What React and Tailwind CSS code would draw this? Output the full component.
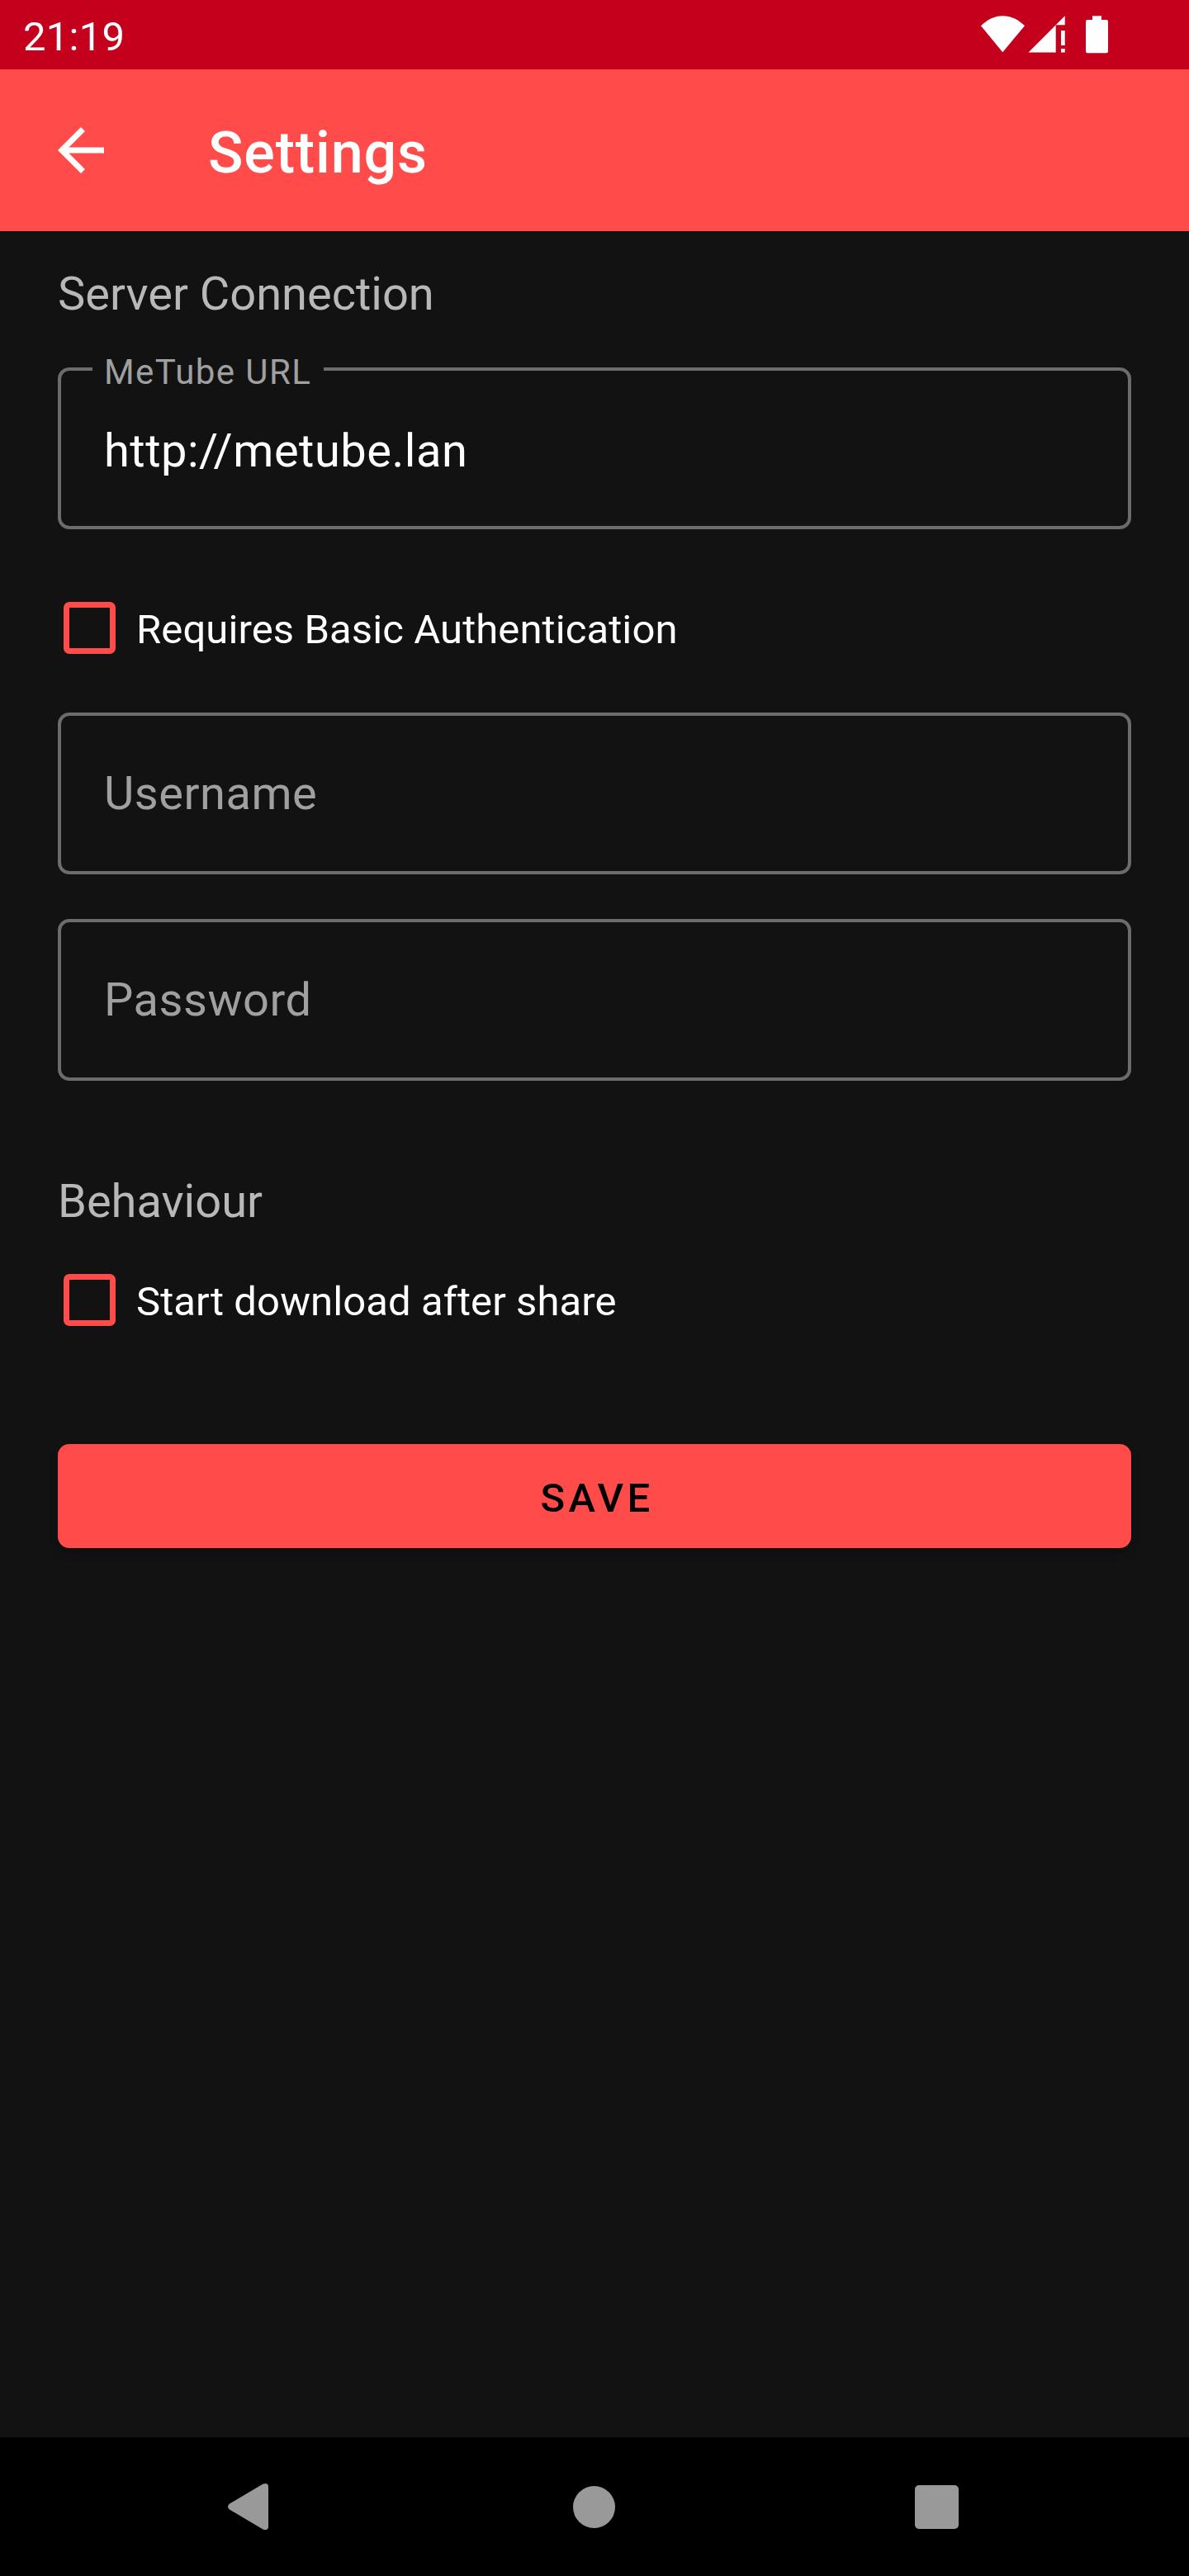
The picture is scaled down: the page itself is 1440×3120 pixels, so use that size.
const body = "text-[56px] leading-[64px]";

function WifiIcon() {
  return (
    <svg className="block h-[84px] w-[56px]" viewBox="1186 0 56 84" fill="#fff" aria-hidden="true">
      <path d="M1214.3 63.3 L1188 31.3 C1195 24 1204.5 19.2 1214.3 19.2 C1224.5 19.2 1234 24 1241 31.3 Z" />
    </svg>
  );
}

function SignalIcon() {
  return (
    <svg className="block h-[84px] w-[48px]" viewBox="1244 0 48 84" fill="#fff" aria-hidden="true">
      <path d="M1245.5 63.5 L1278.7 30.3 V63.5 Z M1289.7 19.3 V30.3 H1278.7 Z M1285 37 H1289.7 V55 H1285 Z M1285 59 H1289.7 V63.5 H1285 Z" />
    </svg>
  );
}

function BatteryIcon() {
  return (
    <svg className="block h-[84px] w-[28px]" viewBox="1315 0 28 84" fill="#fff" aria-hidden="true">
      <path d="M1323 19.2 H1334 V24 H1340 Q1342 24 1342 26 V62.3 Q1342 64.3 1340 64.3 H1317 Q1315 64.3 1315 62.3 V26 Q1315 24 1317 24 H1323 Z" />
    </svg>
  );
}

function SectionTitle({ children }) {
  return <h2 className={`${body} text-[#b8b8b8]`}>{children}</h2>;
}

function TextField({ label, value }) {
  return (
    <div className="relative flex h-[196px] items-center rounded-[14px] border-4 border-[#6c6c6c] px-[52px]">
      {value && (
        <span className="absolute -top-[23px] left-[38px] w-[280px] bg-[#121212] pl-[14px] text-[42px] leading-[50px] tracking-[0.0333em] whitespace-nowrap text-[#a0a0a0]">
          {label}
        </span>
      )}
      <span className={`${body} tracking-[0.009375em] ${value ? "pt-[6px] text-white" : "text-[#a0a0a0]"}`}>
        {value || label}
      </span>
    </div>
  );
}

function CheckRow({ children }) {
  return (
    <label className="flex h-[64px] items-center gap-[25px] pl-[7px]">
      <span className="size-[63px] rounded-[7px] border-[7px] border-[#ff4c4a]" />
      <span className="pt-[6px] text-[49px] leading-[56px] tracking-[0.1px] text-white">{children}</span>
    </label>
  );
}

export default function App() {
  return (
    <div className="flex h-[3120px] w-[1440px] flex-col bg-[#121212] font-['Roboto',sans-serif]">
      <div className="flex h-[84px] shrink-0 items-center bg-[#c5001d] pl-[28px] pr-[97px] text-white">
        <span className="pt-[6px] text-[49px] leading-[56px] tracking-[0.25px]">21:19</span>
        <div className="ml-auto flex">
          <WifiIcon />
          <div className="w-[2px]" />
          <SignalIcon />
          <div className="w-[23px]" />
          <BatteryIcon />
        </div>
      </div>

      <header className="flex h-[196px] shrink-0 items-center bg-[#ff4c4a] pl-[56px] text-white">
        <svg className="block size-[84px]" viewBox="0 0 24 24" fill="#fff" aria-label="Back">
          <path d="M20 11H7.83l5.59-5.59L12 4l-8 8 8 8 1.41-1.41L7.83 13H20v-2z" />
        </svg>
        <h1 className="ml-[112px] pt-[6px] text-[70px] leading-[82px] font-medium tracking-[0.0125em]">Settings</h1>
      </header>

      <main className="flex grow flex-col px-[70px] pt-[44px]">
        <SectionTitle>Server Connection</SectionTitle>
        <div className="mt-[57px]">
          <TextField label="MeTube URL" value="http://metube.lan" />
        </div>
        <div className="mt-[87px]">
          <CheckRow>Requires Basic Authentication</CheckRow>
        </div>
        <div className="mt-[71px] flex flex-col gap-[54px]">
          <TextField label="Username" />
          <TextField label="Password" />
        </div>
        <div className="mt-[114px]">
          <SectionTitle>Behaviour</SectionTitle>
        </div>
        <div className="mt-[55px]">
          <CheckRow>Start download after share</CheckRow>
        </div>
        <button className="mt-[143px] flex h-[126px] items-center justify-center rounded-[14px] bg-[#ff4c4a] pt-[6px] pl-[6px] text-[49px] leading-[56px] font-medium tracking-[0.0893em] text-black shadow-[0_6px_12px_rgba(0,0,0,0.2)]">
          SAVE
        </button>
      </main>

      <nav className="flex h-[168px] shrink-0 items-center bg-black pl-[276px]">
        <svg className="block h-[58px] w-[49px]" viewBox="0 0 49 58" fill="#999" aria-label="Back">
          <path d="M2 25.5 L42.5 1.6 Q49 -0.5 49 5 V53 Q49 58.5 42.5 56.4 L2 32.5 Q-2 29 2 25.5 Z" />
        </svg>
        <div className="ml-[369px] size-[51px] rounded-full bg-[#999]" />
        <div className="ml-[363px] size-[53px] rounded-[5px] bg-[#999]" />
      </nav>
    </div>
  );
}
